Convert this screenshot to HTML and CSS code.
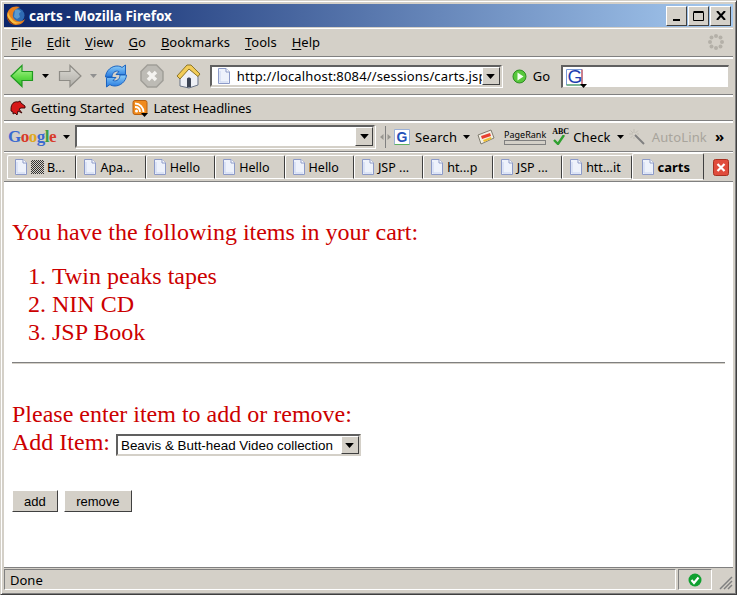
FILE: index.html
```html
<!DOCTYPE html>
<html lang="en">

<head>
    <meta charset="UTF-8">
    <title>carts - Mozilla Firefox</title>
    <link rel="stylesheet" href="styles.css">
</head>

<body>
    <svg class="defs" width="0" height="0">
        <defs>
            <linearGradient id="green" x1="0" y1="0" x2="0" y2="1">
                <stop offset="0" stop-color="#b8f5a0" />
                <stop offset=".55" stop-color="#62dc48" />
                <stop offset="1" stop-color="#2eb52a" />
            </linearGradient>
            <linearGradient id="grey" x1="0" y1="0" x2="0" y2="1">
                <stop offset="0" stop-color="#dcdad4" />
                <stop offset="1" stop-color="#b0aea8" />
            </linearGradient>
            <linearGradient id="blue" x1="0" y1="0" x2="0" y2="1">
                <stop offset="0" stop-color="#8fd0f8" />
                <stop offset="1" stop-color="#2478e0" />
            </linearGradient>
        </defs>
        <symbol id="page" viewBox="0 0 14 16">
            <path d="M1.500 .5H9L12.500 4V15.500H1.500Z" fill="#eef2fb" stroke="#8c9ac8" />
            <path d="M9 .5V4H12.500" fill="#fff" stroke="#8c9ac8" />
            <path d="M3 3V14H11" fill="none" stroke="#c9d4f0" />
        </symbol>
        <symbol id="down" viewBox="0 0 7 4">
            <path d="M0 0H7L3.500 4Z" />
        </symbol>
    </svg>

    <div class="window">
        <div class="titlebar">
            <svg class="ff-logo" width="20" height="20" viewBox="0 0 20 20">
                <circle cx="11" cy="9.500" r="7.500" fill="#2f6cb4" />
                <path d="M9 4c3-1 5 0 6 2-1 0-2 1-2 2l1 3-3 2-3-2Z" fill="#5a9ad0" />
                <path d="M14 1C8-1 1 2 1 10c0 5 4 9 9 9 5 0 8-3 9-6-2 2-5 3-8 2-3-1-5-4-4-7 0-2 1-3 2-4 1-1 3-2 5-3Z" fill="#e8801c" />
                <path d="M2 6c-1 4 0 8 4 11 3 1 6 1 9-1-4 1-7 0-9-3-2-2-3-4-4-7Z" fill="#f8c040" />
                <path d="M1 10c0 4 3 8 8 9-3-2-6-5-8-9Z" fill="#8c3a10" />
            </svg>
            <span class="title-text">carts - Mozilla Firefox</span>
            <div class="win-btns">
                <button class="win-btn"><svg width="10" height="10" viewBox="0 0 10 10"><path d="M1 8H8V10H1Z" /></svg></button>
                <button class="win-btn"><svg width="12" height="11" viewBox="0 0 12 11"><path d="M.5 2.500H10.500V10.500H.5ZM.5 1.500H10.500" fill="none" stroke="#000" /></svg></button>
                <button class="win-btn"><svg width="10" height="9" viewBox="0 0 10 9"><path d="M1 0L9 9M9 0L1 9" fill="none" stroke="#000" stroke-width="2" /></svg></button>
            </div>
        </div>

        <div class="bar menubar">
            <span class="menu"><u>F</u>ile</span>
            <span class="menu"><u>E</u>dit</span>
            <span class="menu"><u>V</u>iew</span>
            <span class="menu"><u>G</u>o</span>
            <span class="menu"><u>B</u>ookmarks</span>
            <span class="menu"><u>T</u>ools</span>
            <span class="menu"><u>H</u>elp</span>
            <svg class="throbber" width="18" height="18" viewBox="0 0 18 18" fill="#b4b0a8">
                <circle cx="9" cy="3" r="2" /><circle cx="13.500" cy="4.500" r="2" /><circle cx="15" cy="9" r="2" /><circle cx="13.500" cy="13.500" r="2" />
                <circle cx="9" cy="15" r="2" /><circle cx="4.500" cy="13.500" r="2" /><circle cx="3" cy="9" r="2" /><circle cx="4.500" cy="4.500" r="2" />
            </svg>
        </div>

        <div class="bar navbar">
            <svg class="ico-back" width="24" height="24" viewBox="0 0 24 24">
                <path d="M12 1.500L1 12 12 22.500V16.500H22.500V7.500H12Z" fill="url(#green)" stroke="#1f9a1f" stroke-width="1.200" />
            </svg>
            <svg class="drop" width="7" height="4"><use href="#down" /></svg>
            <svg class="ico-fwd" width="24" height="24" viewBox="0 0 24 24">
                <path d="M12 1.500L23 12 12 22.500V16.500H1.500V7.500H12Z" fill="url(#grey)" stroke="#8e8c86" stroke-width="1.200" />
            </svg>
            <svg class="drop off" width="7" height="4"><use href="#down" /></svg>
            <svg class="ico-reload" width="24" height="24" viewBox="0 0 24 24">
                <path d="M1.500 13C2 6 8 2 13 2c2 0 4 .5 5 1.500L21.500 1V10.500H12L15 7.500C11 6 8 9 8 13Z" fill="url(#blue)" stroke="#1a62c0" />
                <path d="M22.500 11c-.5 7-6.500 11-11.500 11-2 0-4-.5-5-1.500L2.500 23V13.500H12L9 16.500C13 18 16 15 16 11Z" fill="url(#blue)" stroke="#1a62c0" />
            </svg>
            <svg class="ico-stop" width="24" height="24" viewBox="0 0 24 24">
                <path d="M7.500 1H16.500L23 7.500V16.500L16.500 23H7.500L1 16.500V7.500Z" fill="#bdbbb5" stroke="#a09e98" stroke-width="1.500" />
                <path d="M8 8L16 16M16 8L8 16" stroke="#f4f3f0" stroke-width="3.500" />
            </svg>
            <svg class="ico-home" width="25" height="25" viewBox="0 0 25 25">
                <path d="M4 12V22L13 24 22 21V11L13 5Z" fill="#eef0f6" stroke="#6a7488" />
                <path d="M1 12L11 1H15L24 10 22 12.500 13 5 4 15Z" fill="#f2cc58" stroke="#8c7428" />
                <path d="M11 23.500V15C11 13 15 13 15 15V23Z" fill="#3c4454" />
            </svg>
            <div class="combo url">
                <svg class="page" width="14" height="16"><use href="#page" /></svg>
                <span class="url-text">http://localhost:8084//sessions/carts.jsp</span>
                <span class="arrow"><svg width="9" height="5" viewBox="0 0 7 4"><use href="#down" /></svg></span>
            </div>
            <svg class="ico-go" width="15" height="15" viewBox="0 0 15 15">
                <circle cx="7.500" cy="7.500" r="6.500" fill="#58c83c" stroke="#2c8c20" />
                <path d="M5.500 3.500L11.500 7.500 5.500 11.500Z" fill="#f4fff0" />
            </svg>
            <span class="go">Go</span>
            <div class="search">
                <svg width="21" height="21" viewBox="0 0 21 21">
                    <path d="M.5 .5H16V16H.5Z" fill="#fff" stroke="#7a9ad8" />
                    <path d="M.5 16H16" stroke="#40a040" /><path d="M16 .5V16" stroke="#d83030" />
                    <text class="g-mark" x="1.500" y="14">G</text>
                    <path d="M14 15H21L17.500 19Z" />
                </svg>
            </div>
        </div>

        <div class="bar bookmarks">
            <span class="bm">
                <svg width="16" height="16" viewBox="0 0 16 16">
                    <path d="M1 9C1 4 4 1 8 2L10 1 11 3 15 6 15 8 11 8 9 9 12 13 8 11 7 15 5 13 3 14 3 12 1 11Z" fill="#d81818" stroke="#300" stroke-width=".9" />
                </svg>
                Getting Started
            </span>
            <span class="bm">
                <svg width="16" height="17" viewBox="0 0 16 17">
                    <rect x="1" y="0.500" width="14" height="14" rx="2" fill="#f08a1c" stroke="#b86010" />
                    <circle cx="4.500" cy="11" r="1.500" fill="#fff" />
                    <path d="M3 7c3 0 5 2 5 5M3 3.500c5 0 8.500 4 8.500 8.500" fill="none" stroke="#fff" stroke-width="1.800" />
                    <path d="M9 13H16L12.500 17Z" />
                </svg>
                Latest Headlines
            </span>
        </div>

        <div class="bar googlebar">
            <span class="google-logo"><b class="gb">G</b><b class="gr">o</b><b class="gy">o</b><b class="gb">g</b><b class="gg">l</b><b class="gr">e</b></span>
            <svg class="drop" width="7" height="4"><use href="#down" /></svg>
            <div class="combo gsearch">
                <span class="arrow"><svg width="9" height="5" viewBox="0 0 7 4"><use href="#down" /></svg></span>
            </div>
            <svg class="grip" width="11" height="22" viewBox="0 0 11 22">
                <path d="M5.500 0V22" stroke="#808080" />
                <path d="M3.500 8L0 11 3.500 14ZM7.500 8L11 11 7.500 14Z" fill="#989690" />
            </svg>
            <svg class="g-tile" width="16" height="16" viewBox="0 0 16 16">
                <path d="M.5 .5H15.500V15.500H.5Z" fill="#fff" stroke="#9ab0d8" />
                <path d="M.5 15.500H15.500" stroke="#60b060" />
                <text class="g-small" x="2.500" y="13">G</text>
            </svg>
            <span class="tb-label">Search</span>
            <svg class="drop" width="7" height="4"><use href="#down" /></svg>
            <svg class="ico-card" width="18" height="16" viewBox="0 0 18 16">
                <path d="M1 6L14 1 17 9 4 15Z" fill="#f4f0e4" stroke="#807c70" />
                <path d="M4 7L13 4 14 7 5 10Z" fill="#e84030" /><path d="M6 11L14 8 14.500 10 7 13Z" fill="#f0c030" />
            </svg>
            <span class="pagerank">PageRank<i></i></span>
            <span class="abc">ABC<svg width="14" height="10" viewBox="0 0 14 10"><path d="M2 5L6 9 12 0" fill="none" stroke="#30a030" stroke-width="2.400" /></svg></span>
            <span class="tb-label check">Check</span>
            <svg class="drop" width="7" height="4"><use href="#down" /></svg>
            <svg class="ico-wand" width="16" height="16" viewBox="0 0 16 16">
                <path d="M6 6L15 15" stroke="#808080" stroke-width="2" />
                <path d="M5 0V4M0 5H4M1.500 1.500L4 4M9 1.500L6.500 4M1.500 9L4 6.500M8 5H10M5 8V10" stroke="#c0bdb4" />
            </svg>
            <span class="tb-label muted">AutoLink</span>
            <span class="more">»</span>
        </div>

        <div class="tabbar">
            <span class="tab"><svg width="14" height="16"><use href="#page" /></svg><i class="dots"></i>B...</span>
            <span class="tab"><svg width="14" height="16"><use href="#page" /></svg>Apa...</span>
            <span class="tab"><svg width="14" height="16"><use href="#page" /></svg>Hello</span>
            <span class="tab"><svg width="14" height="16"><use href="#page" /></svg>Hello</span>
            <span class="tab"><svg width="14" height="16"><use href="#page" /></svg>Hello</span>
            <span class="tab"><svg width="14" height="16"><use href="#page" /></svg>JSP ...</span>
            <span class="tab"><svg width="14" height="16"><use href="#page" /></svg>ht...p</span>
            <span class="tab"><svg width="14" height="16"><use href="#page" /></svg>JSP ...</span>
            <span class="tab"><svg width="14" height="16"><use href="#page" /></svg>htt...it</span>
            <span class="tab active"><svg width="14" height="16"><use href="#page" /></svg>carts</span>
            <svg class="tab-close" width="16" height="17" viewBox="0 0 16 17">
                <rect x=".5" y=".5" width="15" height="16" rx="2" fill="#e04c3c" stroke="#a83020" />
                <path d="M4.500 5L11.500 12M11.500 5L4.500 12" stroke="#fff" stroke-width="2.200" />
            </svg>
        </div>

        <div class="content">
            <p class="lead">You have the following items in your cart:</p>
            <ol class="items">
                <li>Twin peaks tapes</li>
                <li>NIN CD</li>
                <li>JSP Book</li>
            </ol>
            <hr class="rule">
            <form class="cart-form">
                <p>Please enter item to add or remove:</p>
                <p class="add-line">Add Item:
                    <span class="combo pick">
                        <select class="pick-select">
                            <option>Beavis &amp; Butt-head Video collection</option>
                        </select>
                        <span class="arrow"><svg width="9" height="5" viewBox="0 0 7 4"><use href="#down" /></svg></span>
                    </span>
                </p>
                <div class="actions">
                    <button type="button" class="btn">add</button>
                    <button type="button" class="btn">remove</button>
                </div>
            </form>
        </div>

        <div class="statusbar">
            <span class="status-text">Done</span>
            <span class="status-cell">
                <svg width="14" height="14" viewBox="0 0 14 14">
                    <circle cx="7" cy="7" r="6.500" fill="#10a030" />
                    <path d="M3.500 7L6 10 10.500 4.500" fill="none" stroke="#fff" stroke-width="2.200" />
                </svg>
            </span>
            <svg class="grippy" width="16" height="16" viewBox="0 0 16 16">
                <path d="M3 15L15 3M7 15L15 7M11 15L15 11" stroke="#808080" stroke-width="1.500" />
            </svg>
        </div>
    </div>
</body>

</html>
```

FILE: styles.css
```css
* {
    margin: 0;
    padding: 0;
    box-sizing: border-box;
}

html,
body {
    width: 737px;
    height: 595px;
    overflow: hidden;
}

.defs {
    position: absolute;
}

.window {
    height: 595px;
    display: flex;
    flex-direction: column;
    padding: 4px 4px 4px 4px;
    background: #d4d0c8;
    border: 1px solid;
    border-color: #d4d0c8 #404040 #404040 #d4d0c8;
    box-shadow: inset 1px 1px 0 #fff, inset -1px -1px 0 #808080;
    font: 13px "Noto Sans", sans-serif;
    color: #000;
}

/* window title */
.titlebar {
    height: 23px;
    margin: -1px -1px 0 -1px;
    display: flex;
    align-items: center;
    padding: 0 2px 0 2px;
    background: linear-gradient(to right, #0a246a, #a6caf0);
    color: #fff;
    flex: none;
}

.ff-logo {
    flex: none;
}

.title-text {
    margin-left: 3px;
    font-size: 13.500px;
    font-weight: 700;
}

.win-btns {
    margin-left: auto;
    display: flex;
}

.win-btn {
    width: 21px;
    height: 20px;
    margin-left: 1px;
    display: flex;
    align-items: center;
    justify-content: center;
    background: #d4d0c8;
    border: 1px solid;
    border-color: #fff #404040 #404040 #fff;
}

/* toolbars */
.bar {
    display: flex;
    align-items: center;
    flex: none;
    margin: 0 -1px;
    border-bottom: 1px solid #808080;
    box-shadow: inset 0 1px 0 #fff, 0 1px 0 #fff;
}

.menubar {
    height: 29px;
    margin-top: 1px;
    padding: 0 9px 0 7px;
    gap: 15px;
}

.menu u {
    text-underline-offset: 2px;
}

.throbber {
    margin-left: auto;
    margin-right: -1px;
}

.navbar {
    height: 37px;
    margin-top: 1px;
    padding: 0 4px 0 6px;
}

.drop {
    flex: none;
    fill: #000;
}

.drop.off {
    fill: #909090;
}

.navbar .drop {
    margin: 0 7px 0 8px;
}

.navbar .ico-fwd {
    margin-left: 2px;
}

.ico-reload {
    margin-left: 0;
}

.ico-stop {
    margin-left: 12px;
}

.ico-home {
    margin-left: 12px;
}

.combo {
    display: flex;
    align-items: center;
    background: #fff;
    border: 2px solid;
    border-color: #606060 #d4d0c8 #d4d0c8 #606060;
    box-shadow: 1px 1px 0 #fff;
}

.arrow {
    width: 18px;
    height: 100%;
    margin-left: auto;
    flex: none;
    display: flex;
    align-items: center;
    justify-content: center;
    background: #d4d0c8;
    border: 1px solid;
    border-color: #fff #404040 #404040 #fff;
}

.url {
    width: 292px;
    height: 22px;
    margin-left: 9px;
    padding-left: 5px;
}

.page {
    flex: none;
}

.url-text {
    margin-left: 6px;
    letter-spacing: .15px;
    white-space: nowrap;
    overflow: hidden;
    flex: 1;
}

.ico-go {
    margin-left: 10px;
}

.go {
    margin-left: 6px;
}

.search {
    width: 168px;
    height: 23px;
    margin-left: 11px;
    padding: 2px 0 0 3px;
    background: #fff;
    border: 1px solid;
    border-color: #606060 #d4d0c8 #d4d0c8 #606060;
    border-width: 2px 1px 1px 2px;
}

.search svg {
    display: block;
    overflow: visible;
}

.g-mark {
    font: 19px "Liberation Sans", sans-serif;
    fill: #1c3fb0;
}

.bookmarks {
    height: 25px;
    margin-top: 1px;
    padding: 0 0 0 6px;
    gap: 8px;
}

.bm {
    display: flex;
    align-items: center;
    gap: 5px;
}

.bm + .bm {
    letter-spacing: -.2px;
}

.googlebar {
    height: 30px;
    margin-top: 1px;
    padding: 0 0 0 4px;
}

.google-logo {
    font: 700 17px "Liberation Serif", serif;
    letter-spacing: -.5px;
}

.google-logo b {
    font-weight: 700;
}

.gb {
    color: #3a6ad0;
}

.gr {
    color: #d83a2a;
}

.gy {
    color: #e0a820;
}

.gg {
    color: #3aa040;
}

.googlebar .drop {
    margin-left: 7px;
}

.gsearch {
    width: 300px;
    height: 23px;
    margin-left: 5px;
}

.grip {
    margin-left: 5px;
    flex: none;
}

.g-tile {
    margin-left: 3px;
    flex: none;
}

.g-small {
    font: 700 14px "Liberation Sans", sans-serif;
    fill: #2450b8;
}

.tb-label {
    margin-left: 5px;
    white-space: nowrap;
    letter-spacing: .15px;
}

.tb-label + .drop {
    margin-left: 6px;
}

.ico-card {
    margin-left: 7px;
    flex: none;
}

.pagerank {
    margin-left: 9px;
    display: flex;
    flex-direction: column;
    font-size: 9px;
    line-height: 11px;
}

.pagerank i {
    display: block;
    height: 5px;
    background: #d4d0c8;
    border: 1px solid #808080;
}

.abc {
    margin-left: 6px;
    width: 15px;
    display: flex;
    flex-direction: column;
    font: 700 8px/7px "Liberation Serif", serif;
}

.check {
    margin-left: 6px;
}

.ico-wand {
    margin-left: 5px;
    flex: none;
}

.muted {
    margin-left: 7px;
    color: #a8a49c;
}

.more {
    margin-left: 8px;
    font-size: 15px;
    font-weight: 700;
    line-height: 1;
}

/* tabs */
.tabbar {
    height: 29px;
    flex: none;
    margin: 1px -1px 0;
    padding: 1px 0 0 3px;
    display: flex;
    align-items: flex-start;
    border-bottom: 1px solid #808080;
}

.tab {
    width: 69.400px;
    height: 24px;
    margin-top: 1px;
    display: flex;
    align-items: center;
    gap: 3px;
    padding-left: 6px;
    background: #d4d0c8;
    white-space: nowrap;
    border: 1px solid;
    border-color: #fff #404040 #fff #fff;
    border-radius: 2px 2px 0 0;
    font-size: 12.500px;
}

.tab svg {
    flex: none;
}

.dots {
    width: 13px;
    height: 14px;
    background: repeating-conic-gradient(#333 0 25%, #d4d0c8 0 50%) 0 0 / 2px 2px;
}

.tab.active {
    width: 72px;
    height: 27px;
    margin-top: -1px;
    font-size: 13px;
    font-weight: 700;
    background: #d4d0c8;
    padding-left: 8px;
}

.tab-close {
    margin: 5px 0 0 9px;
    flex: none;
}

/* page */
.content {
    flex: 1;
    min-height: 0;
    margin: 0 -1px;
    padding: 8px;
    background: #fff;
    font: 24px/28px "Liberation Serif", serif;
    color: #c00;
}

.lead {
    margin-top: 28px;
}

.items {
    margin: 16px 0 0 40px;
}

.rule {
    margin-top: 16px;
    border: 0;
    height: 2px;
    border-top: 1px solid #808080;
    border-bottom: 1px solid #d4d0c8;
}

.cart-form {
    margin-top: 36px;
}

.add-line {
    display: flex;
    align-items: center;
}

.pick {
    width: 245px;
    height: 22px;
    margin: 6px 0 0 6px;
}

.pick-select {
    flex: 1;
    min-width: 0;
    height: 100%;
    padding-left: 3px;
    appearance: none;
    border: 0;
    background: #fff;
    font: 13.400px "Liberation Sans", sans-serif;
    color: #000;
}

.actions {
    margin-top: 34px;
    display: flex;
    gap: 6px;
}

.btn {
    height: 22px;
    padding: 0 11px;
    background: #d4d0c8;
    border: 1px solid;
    border-color: #fff #404040 #404040 #fff;
    font: 13px "Liberation Sans", sans-serif;
    color: #000;
}

.btn + .btn {
    padding: 0 11.500px;
}

/* status */
.statusbar {
    height: 23px;
    flex: none;
    margin: 0 -1px;
    display: flex;
    align-items: stretch;
    gap: 2px;
    border-top: 1px solid #808080;
    padding-top: 1px;
}

.status-text {
    flex: 1;
    display: flex;
    align-items: center;
    padding-left: 5px;
    border: 1px solid;
    border-color: #808080 #fff #fff #808080;
}

.status-cell {
    width: 34px;
    display: flex;
    align-items: center;
    justify-content: center;
    border: 1px solid;
    border-color: #808080 #fff #fff #808080;
}

.grippy {
    margin-left: 3px;
    align-self: flex-end;
    flex: none;
}
```
